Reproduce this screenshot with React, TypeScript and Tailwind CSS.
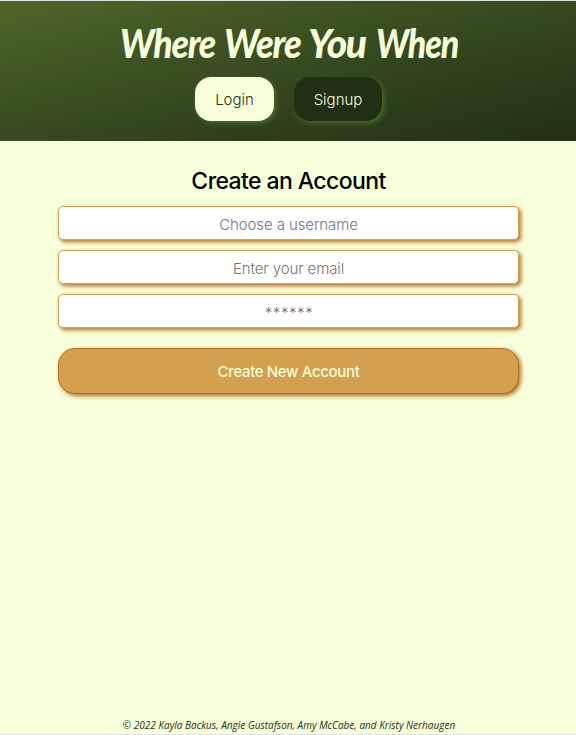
import React from "react";

function Header() {
  return (
    <header className="flex h-[140px] flex-col items-center bg-linear-to-br from-[#4f6629] to-[#1f3015]">
      <h1 className="mt-[17px] flex h-[59px] w-[336px] justify-start whitespace-pre font-['Lato',sans-serif] text-[39px] font-black italic leading-[51px] tracking-[-1.35px] text-[#f6ffda]">
        <span className="w-[104px] origin-left scale-x-[0.91]">Where </span>
        <span className="w-[84px] origin-left scale-x-[0.93]">Were </span>
        <span className="w-[68px] origin-left">You </span>
        <span className="w-[80px] origin-left scale-x-[0.87]">When</span>
      </h1>
      <nav className="flex gap-5 pl-px text-[15px] font-light">
        <button className="flex h-11 w-[79px] items-center justify-center rounded-[16px] bg-[#f6ffda] pt-[3px] text-[#1f3015] shadow-[2px_2px_5px_#4f6b2c]">
          Login
        </button>
        <button className="flex h-11 w-[88px] items-center justify-center rounded-[16px] bg-[#1f3015] pt-[3px] text-[#f6ffda] shadow-[2px_2px_5px_#4f6b2c]">
          Signup
        </button>
      </nav>
    </header>
  );
}

const fieldClass =
  "block h-[34px] w-full rounded-[5px] border border-[#d4a04f] bg-white pt-0.5 text-center text-[15px] font-light tracking-[-0.1px] text-[#1f3015] outline-none placeholder:text-[#757575] placeholder:opacity-100 shadow-[2px_2px_4px_#b66c1b]";

export default function App() {
  return (
    <div className="flex h-[735px] w-full flex-col border-y border-[#dfe2e0] bg-[#f6ffda] font-['Inter',sans-serif]">
      <Header />
      <main className="mr-[57px] ml-[58px] w-[461px] flex-1 pt-[22px]">
        <h2 className="h-[43px] text-center text-[23px] font-medium leading-[37px] tracking-[-0.6px] text-black">
          Create an Account
        </h2>
        <form className="flex w-[461px] flex-col gap-2.5" onSubmit={(e) => e.preventDefault()}>
          <input className={fieldClass} placeholder="Choose a username" />
          <input className={fieldClass} placeholder="Enter your email" />
          <input className={fieldClass + " indent-[1px] placeholder:tracking-[0.6px]"} type="password" placeholder="******" />
          <button className="mt-2.5 h-[46px] w-full rounded-[17px] border border-[#b66c1b] bg-[#d4a04f] pt-[3px] text-[15px] font-medium tracking-[-0.35px] text-[#f6ffda] shadow-[2px_2px_4px_#b66c1b]">
            Create New Account
          </button>
        </form>
      </main>
      <footer className="h-[17px] whitespace-nowrap pl-0.5 text-center font-['Open_Sans',sans-serif] text-[10px] italic leading-[17px] text-[#1f3015]">
        © 2022 Kayla Backus, Angie Gustafson, Amy McCabe, and Kristy Nerhaugen
      </footer>
    </div>
  );
}
